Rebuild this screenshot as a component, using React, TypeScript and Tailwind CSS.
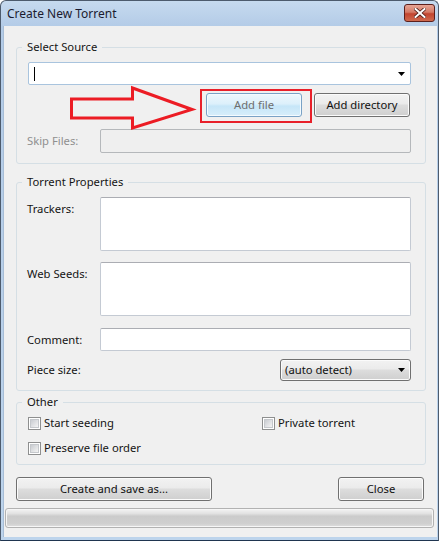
import React from 'react';

const btnSkin =
  'rounded-[3px] border border-[#707070] bg-[linear-gradient(180deg,#f2f2f2_0%,#ebebeb_45%,#dddddd_50%,#cfcfcf_100%)] shadow-[inset_0_0_0_1px_#fbfbfb] text-[#111] flex items-center';

const textBox = 'bg-white border border-[#c4cad3] border-t-[#abadb3] rounded-[2px]';

function DropArrow() {
  return (
    <svg width="7" height="4" viewBox="0 0 7 4" className="shrink-0">
      <polygon points="0,0 7,0 3.5,4" fill="#000" />
    </svg>
  );
}

function Check({ label }: { label: string }) {
  return (
    <label className="flex items-center h-[16px] gap-[3px]">
      <span className="w-[13px] h-[13px] border border-[#8e8f8f] bg-white p-[1px]">
        <span className="block w-full h-full border border-[#c5c8cc] bg-[linear-gradient(135deg,#c9ccd1,#f4f4f4)]" />
      </span>
      <span>{label}</span>
    </label>
  );
}

export default function App() {
  return (
    <div className="relative w-[439px] h-[541px] flex flex-col rounded-t-[6px] border border-[#4d5b6d] border-b-[#1f3550] bg-[linear-gradient(180deg,#c6daef_0px,#b3cbe7_26px,#bdd4ec_100%)] font-['Noto_Sans',sans-serif] text-[11.25px] leading-[16px] text-[#141414]">
      {/* Title bar */}
      <div className="h-[25px] flex items-center pl-[6px] pr-[3px]">
        <span className="text-[12px] text-[#1b1b2f]">Create New Torrent</span>
        <div className="ml-auto mt-[-2px] w-[31px] h-[18px] rounded-[3px] border border-[#5c1f1c] bg-[linear-gradient(180deg,#e6a596_0%,#d47a66_45%,#c2442f_55%,#cf6a4f_100%)] flex items-center justify-center">
          <svg width="12" height="10" viewBox="0 0 12 10">
            <path d="M1.5 1 L10.5 9 M10.5 1 L1.5 9" stroke="#4a1a16" strokeWidth="3.6" strokeLinecap="square" />
            <path d="M1.5 1 L10.5 9 M10.5 1 L1.5 9" stroke="#fff" strokeWidth="2" strokeLinecap="square" />
          </svg>
        </div>
      </div>

      {/* Client area */}
      <div className="flex-1 ml-[2px] mr-[1px] mb-[3px] bg-[#f0f0f0] border-l border-[#a7bdd6] flex flex-col">
        {/* Select Source */}
        <fieldset className="mt-[13px] ml-[12px] w-[410px] border border-[#d5dfe5] rounded-[3px] pl-[11px] pr-[14px] pb-[10px] pt-[7px]">
          <legend className="ml-[-6px] px-[5px] leading-[16px]">Select Source</legend>
          <div className="h-[23px] bg-white border border-[#a9c4de] rounded-[2px] flex items-center pl-[5px] pr-[4px]">
            <span className="w-px h-[14px] bg-black" />
            <span className="ml-auto mr-[1px]">
              <DropArrow />
            </span>
          </div>
          <div className="mt-[8px] flex justify-end gap-[12px]">
            <button className="w-[96px] h-[24px] rounded-[3px] border border-[#7aa2c6] bg-[linear-gradient(180deg,#eef8fd_0%,#dcf0fb_45%,#c6e6f8_55%,#d7eefb_100%)] shadow-[inset_0_0_0_1px_#f4fbff] text-[#6e6e6e] flex items-center justify-center">
              Add file
            </button>
            <button className={`${btnSkin} justify-center w-[96px] h-[24px] mr-[1px]`}>Add directory</button>
          </div>
          <div className="mt-[12px] flex items-center">
            <span className="w-[73px] ml-[-1px] text-[#8f8f8f]">Skip Files:</span>
            <div className="flex-1 h-[24px] bg-[#efefef] border border-[#b5b8bb] rounded-[2px]" />
          </div>
        </fieldset>

        {/* Torrent Properties */}
        <fieldset className="mt-[10px] ml-[12px] w-[410px] border border-[#d5dfe5] rounded-[3px] pl-[10px] pr-[14px] pb-[9px] pt-[7px]">
          <legend className="ml-[-5px] px-[5px] leading-[16px]">Torrent Properties</legend>
          <div className="flex items-start">
            <span className="w-[73px] mt-[4px]">Trackers:</span>
            <div className={`flex-1 h-[54px] ${textBox}`} />
          </div>
          <div className="mt-[11px] flex items-start">
            <span className="w-[73px] mt-[4px]">Web Seeds:</span>
            <div className={`flex-1 h-[54px] ${textBox}`} />
          </div>
          <div className="mt-[12px] flex items-center">
            <span className="w-[73px]">Comment:</span>
            <div className={`flex-1 h-[23px] ${textBox}`} />
          </div>
          <div className="mt-[8px] flex items-center">
            <span className="w-[73px]">Piece size:</span>
            <div className={`${btnSkin} ml-auto w-[131px] h-[22px] justify-between pl-[4px] pr-[5px]`}>
              <span>(auto detect)</span>
              <DropArrow />
            </div>
          </div>
        </fieldset>

        {/* Other */}
        <fieldset className="mt-[3px] ml-[12px] w-[410px] border border-[#d5dfe5] rounded-[3px] pl-[11px] pr-[14px] pb-[8px] pt-[5px]">
          <legend className="ml-[-6px] px-[5px] leading-[16px]">Other</legend>
          <div className="flex">
            <div className="w-[234px]">
              <Check label="Start seeding" />
            </div>
            <Check label="Private torrent" />
          </div>
          <div className="mt-[9px]">
            <Check label="Preserve file order" />
          </div>
        </fieldset>

        {/* Buttons */}
        <div className="mt-[12px] ml-[12px] mr-[13px] flex justify-between">
          <button className={`${btnSkin} justify-center w-[196px] h-[24px]`}>Create and save as...</button>
          <button className={`${btnSkin} justify-center w-[86px] h-[24px]`}>Close</button>
        </div>

        {/* Progress bar */}
        <div className="mt-[7px] ml-[1px] w-[429px] h-[20px] rounded-[3px] border border-[#b2b2b2] bg-[linear-gradient(180deg,#f4f4f4_0%,#e2e2e2_25%,#cbcbcb_40%,#cfcfcf_80%,#dedede_100%)] shadow-[inset_0_0_0_1px_#f6f6f6]" />
      </div>

      {/* Annotation overlay */}
      <svg
        className="absolute left-0 top-0 pointer-events-none"
        width="439"
        height="541"
        viewBox="0 0 439 541"
      >
        <polygon
          points="70.5,98 131.5,98 131.5,87 191,108.5 131.5,127 131.5,117 70.5,117"
          fill="none"
          stroke="#ec1c24"
          strokeWidth="3"
          strokeLinejoin="miter"
        />
      </svg>
      <div className="absolute left-[199px] top-[88px] w-[112px] h-[34px] border-2 border-[#e8202a] pointer-events-none" />
    </div>
  );
}
